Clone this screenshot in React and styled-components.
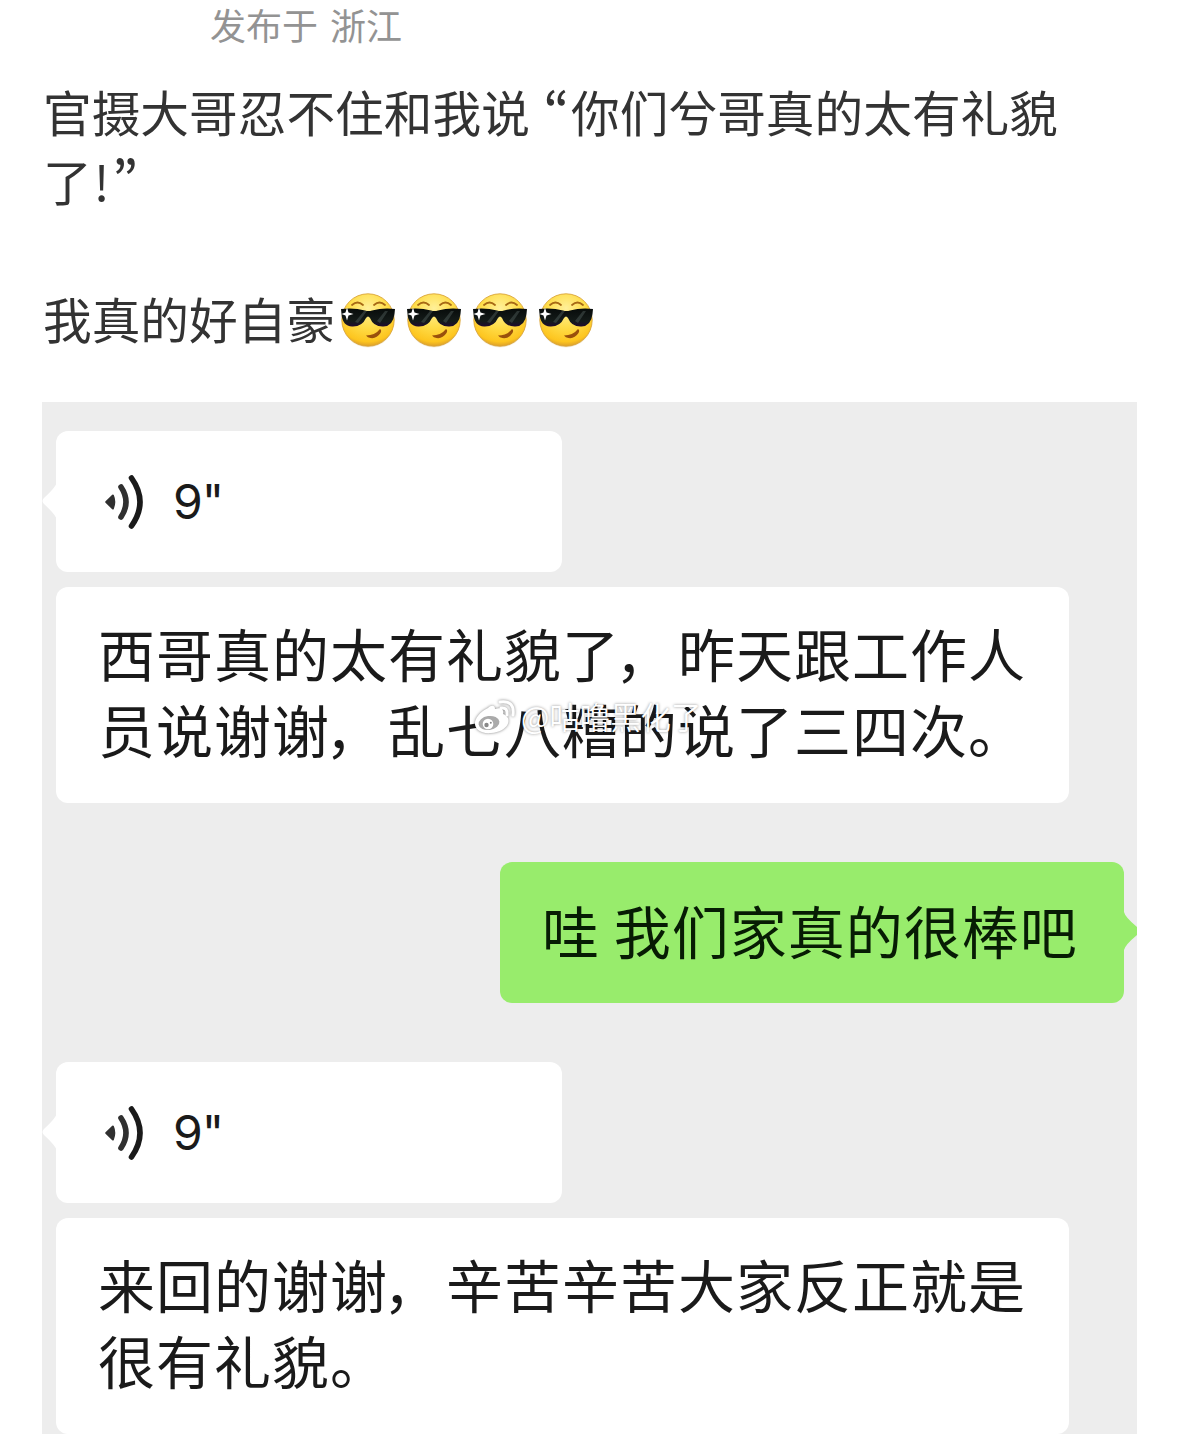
import React from 'react'
import styled, { createGlobalStyle } from 'styled-components'

const GlobalStyle = createGlobalStyle`
    * {
        box-sizing: border-box;
    }

    body {
        margin: 0;
        background-color: #fff;
        font-family: 'Noto Sans CJK SC', sans-serif;
    }
`

const Smirk = () => (
    <Emoji viewBox="0 0 66 66">
        <defs>
            <radialGradient id="face" cx="50%" cy="28%" r="72%">
                <stop offset="0" stopColor="#fff09a" />
                <stop offset="0.5" stopColor="#ffdd49" />
                <stop offset="0.88" stopColor="#fdc51f" />
                <stop offset="1" stopColor="#dda02a" />
            </radialGradient>
            <linearGradient id="lens" x1="0" y1="0" x2="0" y2="1">
                <stop offset="0" stopColor="#080c0b" />
                <stop offset="0.7" stopColor="#141b19" />
                <stop offset="1" stopColor="#200a30" />
            </linearGradient>
        </defs>
        <ellipse cx="33" cy="34.5" rx="26" ry="26" fill="#f3eddd" />
        <circle cx="33" cy="33" r="26.2" fill="url(#face)" stroke="#d9a43a" strokeWidth="0.9" />
        <path d="M17 18q5.500-5 11 0M39 18q5.500-5 11 0" fill="none" stroke="#a76a16" strokeWidth="1.8" strokeLinecap="round" />
        <path d="M6 22q13-1.500 24 1.500q3.500 1 7 0q11-3 23-1.500l-.5 5q-1.500 12-11 12.500q-10 .5-13.500-8.500q-2-3-4 0q-4 9-14 8.500q-9.500-.5-10.500-12.500z" fill="url(#lens)" />
        <path d="M20 35l9-11h3l-9 12zM42 34l8-10h3l-8 12z" fill="#53605e" opacity="0.45" />
        <path d="M12 20.500l1.500 5 5 1.500-5 1.500-1.500 5-1.500-5-4-1.500 4-1.500z" fill="#fff" />
        <path d="M31 48.500q9 0 14-6.500q2 1 .5 4q-4 6-10 5q-3-.5-4.500-2.500z" fill="#99500c" />
    </Emoji>
)

const VoiceIcon = () => (
    <svg width="42" height="56" viewBox="0 0 42 56">
        <path d="M1.500 27.200L8.200 20.800q1-.8 1.600.3q3 6.900 0 13.800q-.6 1.100-1.600.3L1.500 28.800q-.8-.8 0-1.600z" fill="#303030" />
        <path d="M17 13q10 15 0 30" fill="none" stroke="#303030" strokeWidth="5.600" strokeLinecap="round" />
        <path d="M27.500 4q17 24 0 48" fill="none" stroke="#1a1a1a" strokeWidth="5.600" strokeLinecap="round" />
    </svg>
)

const WeiboLogo = () => (
    <svg width="44" height="36" viewBox="0 0 44 36">
        <path d="M15 9c3-3 7-3 7 1 7-2 9 1 8 5 11 4 5 18-12 19C8 35 1 30 2 23c1-6 8-12 13-14z" fill="#fff" />
        <ellipse cx="16" cy="24" rx="10.500" ry="7" fill="#aaa" transform="rotate(-8 16 24)" />
        <circle cx="15" cy="25" r="5.300" fill="#fff" />
        <circle cx="13.500" cy="26" r="2.200" fill="#888" />
        <circle cx="17.800" cy="23.800" r="1" fill="#888" />
        <path d="M28 9q7-1 6 7M27 3q15-2 13 13" fill="none" stroke="#fff" strokeWidth="3" strokeLinecap="round" />
    </svg>
)

const VoiceMessage = ({ seconds }) => (
    <VoiceBubble>
        <LeftTail viewBox="0 0 15 38">
            <path d="M15 0Q14 5 2 16Q-1 19 2 22Q14 33 15 38z" fill="#fff" />
        </LeftTail>
        <VoiceIcon />
        <Duration>{seconds}"</Duration>
    </VoiceBubble>
)

export default function App() {
    return (
        <Page>
            <GlobalStyle />
            <Meta>发布于 浙江</Meta>
            <PostText>
                官摄大哥忍不住和我说 <Quote>“</Quote>你们兮哥真的太有礼貌<br />
                了<Mark>!</Mark><Quote>”</Quote>
            </PostText>
            <LastLine>
                我真的好自豪
                <Emojis><Smirk /><Smirk /><Smirk /><Smirk /></Emojis>
            </LastLine>

            <Chat>
                <VoiceMessage seconds={9} />
                <TextBubble>
                    西哥真的太有礼貌了<Comma>，</Comma>昨天跟工作人<br />员说谢谢<Comma>，</Comma>乱七八糟的说了三四次。
                    <Watermark>
                        <WeiboLogo />
                        <span>@咕噜黑化了</span>
                    </Watermark>
                </TextBubble>
                <ReplyBubble>
                    哇 我们家真的很棒吧
                    <RightTail viewBox="0 0 13 38">
                        <path d="M0 0Q1 5 13 15V23Q1 33 0 38z" fill="#98ec6c" />
                    </RightTail>
                </ReplyBubble>
                <VoiceMessage seconds={9} />
                <TextBubble>
                    来回的谢谢<Comma>，</Comma>辛苦辛苦大家反正就是<br />很有礼貌。
                </TextBubble>
            </Chat>
        </Page>
    )
}

const Page = styled.div`
    display: flex;
    flex-direction: column;
    width: 1179px;
    height: 1434px;
    padding: 0 42px;
    overflow: hidden;
    background-color: #fff;
`

const Meta = styled.div`
    flex-shrink: 0;
    height: 77px;
    padding-left: 168px;
    line-height: 49px;
    font-size: 36px;
    word-spacing: 4px;
    color: #939393;
    white-space: pre;
`

const PostText = styled.p`
    margin: 0 0 71px;
    padding-left: 1px;
    line-height: 69px;
    font-size: 48.700px;
    word-spacing: 3px;
    color: #333;
    white-space: nowrap;
`

const LastLine = styled(PostText)`
    display: flex;
    align-items: center;
    height: 65px;
    margin: 0 0 51px;
`

const Quote = styled.span`
    font-feature-settings: 'pwid';
    font-weight: 500;
    line-height: 1;
    letter-spacing: 2px;
`

const Mark = styled.span`
    margin: 0 3px 0 2px;
`

const Emojis = styled.span`
    display: flex;
`

const Emoji = styled.svg`
    width: 66px;
    height: 66px;
    margin-top: 2px;
`

const Chat = styled.div`
    display: flex;
    flex-direction: column;
    align-items: flex-start;
    flex: 1;
    min-height: 0;
    padding: 29px 13px 0 14px;
    overflow: hidden;
    background-color: #ededed;
`

const Bubble = styled.div`
    position: relative;
    flex-shrink: 0;
    border-radius: 12px;
    background-color: #fff;
    color: #1a1a1a;
    font-size: 57px;
    letter-spacing: 1px;
    line-height: 76px;
    white-space: nowrap;
`

const Comma = styled.span`
    margin: 0 5px 0 -5px;
`

const VoiceBubble = styled(Bubble)`
    display: flex;
    align-items: center;
    width: 506px;
    height: 141px;
    padding-left: 48px;
    margin-bottom: 15px;
`

const Duration = styled.span`
    margin-left: 27px;
    font-family: Inter, sans-serif;
    font-size: 48px;
    letter-spacing: -1px;
`

const TextBubble = styled(Bubble)`
    width: 1013px;
    height: 216px;
    padding: 27px 42px;
    margin-bottom: 59px;
`

const ReplyBubble = styled(Bubble)`
    align-self: flex-end;
    width: 624px;
    height: 141px;
    padding: 29px 42px;
    margin-bottom: 59px;
    background-color: #98ec6c;
    color: #071c04;
`

const LeftTail = styled.svg`
    position: absolute;
    left: -14px;
    top: 51px;
    width: 15px;
    height: 38px;
`

const RightTail = styled.svg`
    position: absolute;
    right: -13px;
    top: 50px;
    width: 13px;
    height: 38px;
`

/* sits over the second line of the message */
const Watermark = styled.div`
    position: absolute;
    left: 417px;
    top: 111px;
    display: flex;
    align-items: center;
    height: 38px;
    font-size: 30.400px;
    font-weight: 350;
    letter-spacing: 0;
    line-height: 38px;
    color: #fff;
    text-shadow: 0 0 3px rgba(0, 0, 0, 0.450);

    svg {
        filter: drop-shadow(0 0 1.500px rgba(0, 0, 0, 0.500));
    }

    span {
        margin: -3px 0 0 4px;
    }
`
